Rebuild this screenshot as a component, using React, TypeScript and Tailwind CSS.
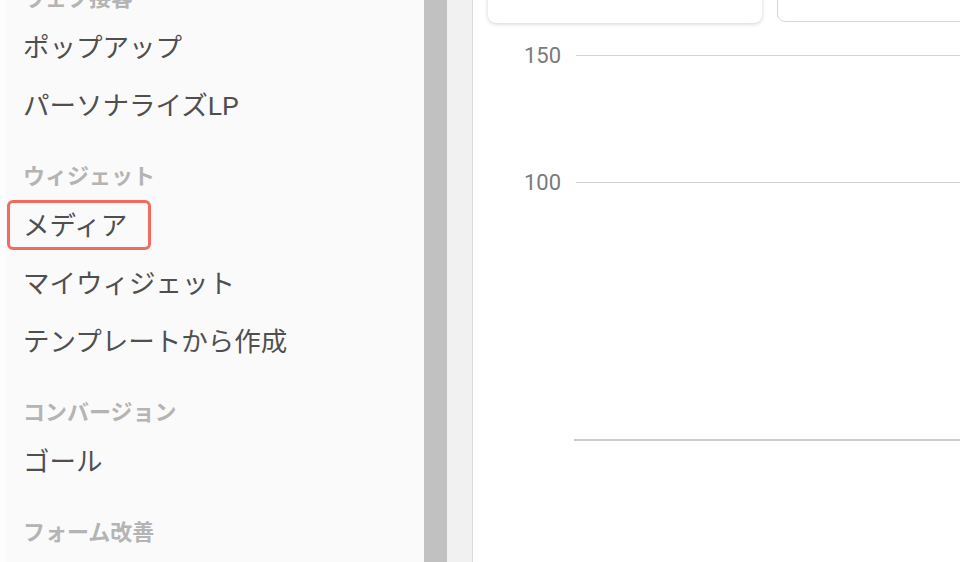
import React from 'react';

type NavEntry = { kind: 'header' | 'item'; label: string; active?: boolean };

const nav: NavEntry[] = [
  { kind: 'header', label: 'ウェブ接客' },
  { kind: 'item', label: 'ポップアップ' },
  { kind: 'item', label: 'パーソナライズLP' },
  { kind: 'header', label: 'ウィジェット' },
  { kind: 'item', label: 'メディア', active: true },
  { kind: 'item', label: 'マイウィジェット' },
  { kind: 'item', label: 'テンプレートから作成' },
  { kind: 'header', label: 'コンバージョン' },
  { kind: 'item', label: 'ゴール' },
  { kind: 'header', label: 'フォーム改善' },
];

const font = { fontFamily: "Roboto, 'Noto Sans CJK JP', sans-serif" };

const Sidebar: React.FC = () => (
  <aside className="w-[418px] shrink-0 bg-[#fafafa] pl-[17px] overflow-hidden">
    <ul className="-mt-[43px]">
      {nav.map((n, i) =>
        n.kind === 'header' ? (
          <li
            key={i}
            className="mt-[20px] h-[42px] flex items-center text-[22px] font-bold text-[#b4b4b4]"
          >
            {n.label}
          </li>
        ) : (
          <li key={i} className="relative h-[58px] flex items-center text-[26.5px] text-[#4f4f4f]">
            {n.active && (
              <span className="absolute left-[-16px] top-[3px] w-[144px] h-[50px] rounded-[6px] border-[3px] border-[#f26a61]" />
            )}
            <span className="relative">{n.label}</span>
          </li>
        )
      )}
    </ul>
  </aside>
);

const Chart: React.FC = () => (
  <div className="flex flex-col">
    <div className="mt-[19px] h-[26px] flex items-center">
      <span className="w-[88px] text-right text-[22px] text-[#7a7a7a]">150</span>
      <div className="ml-[15px] flex-1 h-px bg-[#d2d2d2]" />
    </div>
    <div className="mt-[101px] h-[26px] flex items-center">
      <span className="w-[88px] text-right text-[22px] text-[#7a7a7a]">100</span>
      <div className="ml-[15px] flex-1 h-px bg-[#d2d2d2]" />
    </div>
    <div className="mt-[244px] ml-[101px] h-[2px] bg-[#cccccc]" />
  </div>
);

export default function App() {
  return (
    <div className="flex w-[960px] h-[562px] overflow-hidden bg-white" style={font}>
      <div className="w-[6px] shrink-0 bg-[#fdfdfd]" />
      <Sidebar />
      <div className="w-[23px] shrink-0 bg-[#c1c1c1]" />
      <div className="w-[26px] shrink-0 bg-[#f1f1f1] border-r border-[#dcdcdc]" />
      <main className="flex-1 min-w-0 bg-white overflow-hidden">
        <div className="flex gap-[15px] pl-[15px] -mt-[40px]">
          <div className="w-[274px] h-[63px] shrink-0 rounded-[8px] bg-white shadow-[0_1px_4px_rgba(0,0,0,0.18)]" />
          <div className="w-[300px] h-[62px] shrink-0 rounded-[8px] bg-white border border-[#d6d6d6]" />
        </div>
        <Chart />
      </main>
    </div>
  );
}
